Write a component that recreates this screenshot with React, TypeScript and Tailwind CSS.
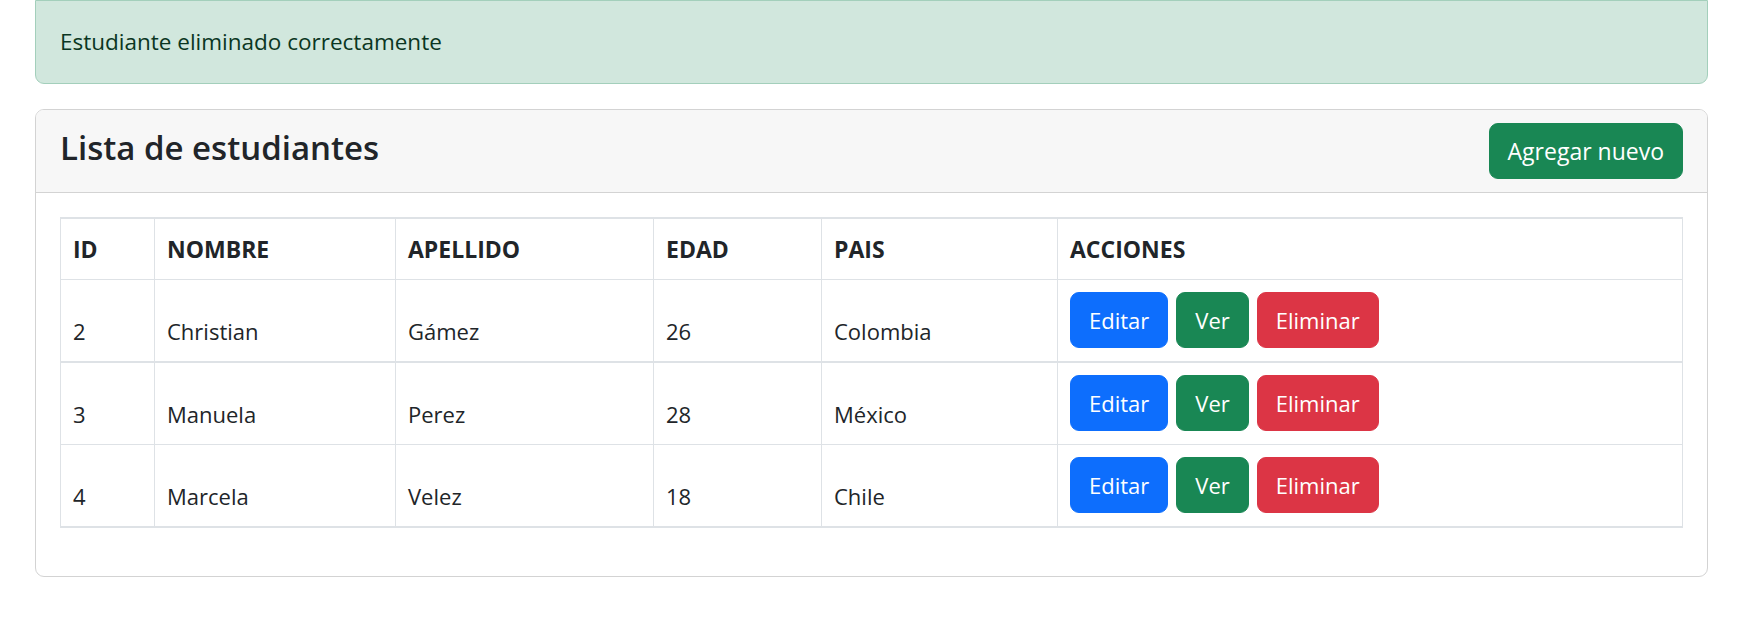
import React from "react";

const students = [
  { id: 2, nombre: "Christian", apellido: "Gámez", edad: 26, pais: "Colombia" },
  { id: 3, nombre: "Manuela", apellido: "Perez", edad: 28, pais: "México" },
  { id: 4, nombre: "Marcela", apellido: "Velez", edad: 18, pais: "Chile" },
];

const App = () => {
  return (
    <div className="pl-[35px] pr-[33px] font-['Open_Sans',sans-serif] text-[#212529] text-[22px] leading-[36px]">
      <div className="px-6 py-[23px] text-[22.5px] border border-[#a3cfbb] bg-[#d1e7dd] text-[#0a3622] rounded-b-[9px] h-[84px]">
        Estudiante eliminado correctamente
      </div>

      <div className="mt-[25px] border border-[#d3d3d3] rounded-[9px] overflow-hidden">
        <div className="flex justify-between items-center bg-[#f7f7f7] px-6 py-[13px] border-b border-[#d3d3d3]">
          <h4 className="text-[33px] font-semibold leading-[43px] -mt-2">Lista de estudiantes</h4>
          <button className="bg-[#198754] text-white text-[23px] rounded-[9px] px-[18px] py-[9px] leading-[36px] border border-[#198754]">
            Agregar nuevo
          </button>
        </div>

        <div className="p-6">
          <table className="w-full table-fixed border-collapse mb-6 border-y-2 border-[#dee2e6]">
            <thead>
              <tr className="text-[23px]">
                <th className="w-[94px] text-left font-bold px-3 py-3 border border-[#dee2e6]">ID</th>
                <th className="w-[241px] text-left font-bold px-3 py-3 border border-[#dee2e6]">NOMBRE</th>
                <th className="w-[258px] text-left font-bold px-3 py-3 border border-[#dee2e6]">APELLIDO</th>
                <th className="w-[168px] text-left font-bold px-3 py-3 border border-[#dee2e6]">EDAD</th>
                <th className="w-[236px] text-left font-bold px-3 py-3 border border-[#dee2e6]">PAIS</th>
                <th className="text-left font-bold px-3 py-3 border border-[#dee2e6]">ACCIONES</th>
              </tr>
            </thead>
            <tbody>
              {students.map((s, i) => (
                <tr key={s.id} className={i === 1 ? "border-t-2 border-[#dee2e6]" : ""}>
                  <td className="px-3 pt-3 pb-3 border border-[#dee2e6] align-bottom">{s.id}</td>
                  <td className="px-3 pt-3 pb-3 border border-[#dee2e6] align-bottom">{s.nombre}</td>
                  <td className="px-3 pt-3 pb-3 border border-[#dee2e6] align-bottom">{s.apellido}</td>
                  <td className="px-3 pt-3 pb-3 border border-[#dee2e6] align-bottom">{s.edad}</td>
                  <td className="px-3 pt-3 pb-3 border border-[#dee2e6] align-bottom">{s.pais}</td>
                  <td className="px-3 pt-3 pb-[13px] border border-[#dee2e6]">
                    <div className="flex gap-2">
                      <button className="bg-[#0d6efd] text-white rounded-[9px] px-[18px] py-[9px] leading-[36px] border border-[#0d6efd]">
                        Editar
                      </button>
                      <button className="bg-[#198754] text-white rounded-[9px] px-[18px] py-[9px] leading-[36px] border border-[#198754]">
                        Ver
                      </button>
                      <button className="bg-[#dc3545] text-white rounded-[9px] px-[18px] py-[9px] leading-[36px] border border-[#dc3545]">
                        Eliminar
                      </button>
                    </div>
                  </td>
                </tr>
              ))}
            </tbody>
          </table>
        </div>
      </div>
    </div>
  );
};

export default App;
